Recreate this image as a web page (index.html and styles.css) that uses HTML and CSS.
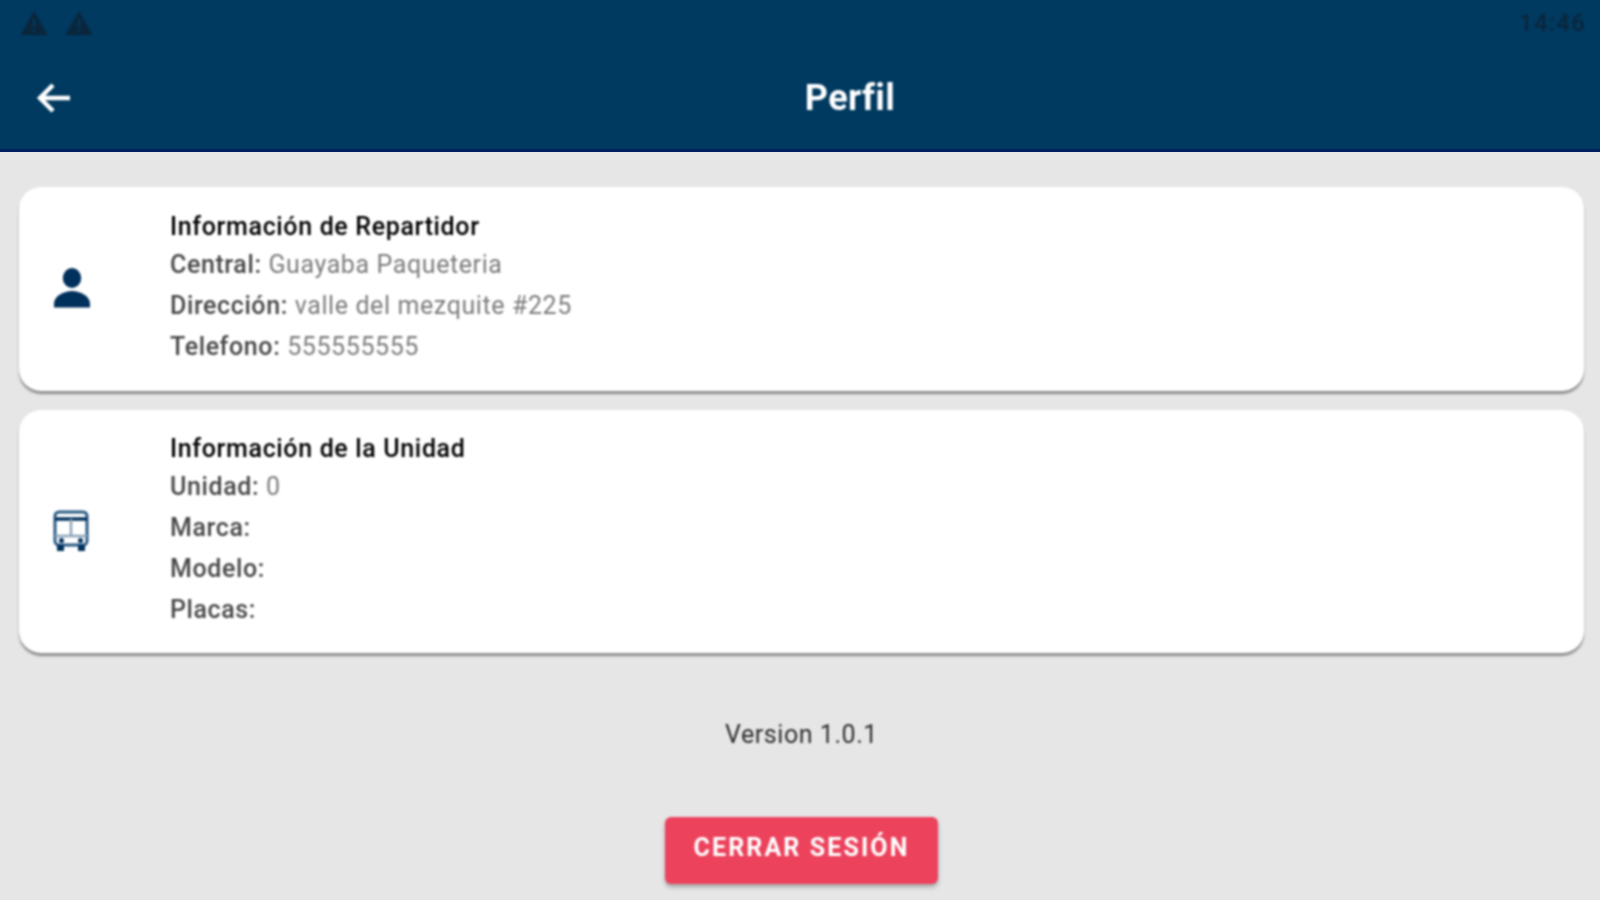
FILE: index.html
```html
<!DOCTYPE html>
<html lang="es">
<head>
<meta charset="utf-8">
<title>Perfil</title>
<link rel="stylesheet" href="styles.css">
</head>
<body>
<div class="screen">
  <header class="appbar">
    <div class="status">
      <div class="status-icons">
        <svg class="warn" viewBox="0 0 28 26"><path d="M14 1 L27.500 25 H.5 Z" fill="#0a263c"/><path d="M12.800 9h2.400v8h-2.400zM12.800 19h2.400v2.600h-2.400z" fill="#003a60"/></svg>
        <svg class="warn" viewBox="0 0 28 26"><path d="M14 1 L27.500 25 H.5 Z" fill="#0a263c"/><path d="M12.800 9h2.400v8h-2.400zM12.800 19h2.400v2.600h-2.400z" fill="#003a60"/></svg>
      </div>
      <span class="clock">14:46</span>
    </div>
    <div class="toolbar">
      <svg class="back" viewBox="0 0 36 32"><path d="M34 16H4M17 3 4 16l13 13" fill="none" stroke="#fff" stroke-width="4.400"/></svg>
      <h1 class="title">Perfil</h1>
    </div>
  </header>
  <main class="content">
    <section class="card card-driver">
      <div class="card-icon">
        <svg class="icon-person" viewBox="0 0 38 40"><ellipse cx="19" cy="10" rx="9.200" ry="10" fill="#00305c"/><path d="M1 39.500v-4C1 28 11 23 19 23s18 5 18 12.500v4Z" fill="#00305c"/></svg>
      </div>
      <div class="card-body">
        <h2 class="card-title">Información de Repartidor</h2>
        <p class="row"><b>Central:</b> Guayaba Paqueteria</p>
        <p class="row"><b>Dirección:</b> valle del mezquite #225</p>
        <p class="row"><b>Telefono:</b> 555555555</p>
      </div>
    </section>
    <section class="card card-unit">
      <div class="card-icon">
        <svg class="icon-bus" viewBox="0 0 36 42"><g fill="none" stroke="#2a5a85" stroke-width="3"><rect x="2" y="2" width="32" height="33" rx="4"/><path d="M2 9h32" stroke="#00305c" stroke-width="3.500"/><path d="M2 26h32M18 9v17" stroke="#8aa3b8" stroke-width="2.500"/></g><circle cx="8.500" cy="30.500" r="2.500" fill="#00305c"/><circle cx="27.500" cy="30.500" r="2.500" fill="#00305c"/><path d="M4 35h7v6H4zM25 35h7v6h-7z" fill="#00305c"/></svg>
      </div>
      <div class="card-body">
        <h2 class="card-title">Información de la Unidad</h2>
        <p class="row"><b>Unidad:</b> 0</p>
        <p class="row"><b>Marca:</b></p>
        <p class="row"><b>Modelo:</b></p>
        <p class="row"><b>Placas:</b></p>
      </div>
    </section>
    <p class="version">Version 1.0.1</p>
    <button class="logout" type="button">CERRAR SESIÓN</button>
  </main>
</div>
</body>
</html>
```
FILE: styles.css
```css
html, body {
  margin: 0;
  height: 100%;
  overflow: hidden;
  background: #e6e6e6;
}
.screen {
  width: 1600px;
  height: 900px;
  display: flex;
  flex-direction: column;
  font-family: Roboto, "Liberation Sans", sans-serif;
}
.appbar {
  height: 149px;
  flex: none;
  background: #003a60;
  border-bottom: 3px solid #001f5c;
}
.status {
  height: 46px;
  display: flex;
  align-items: center;
  justify-content: space-between;
  padding: 0 14px 0 20px;
  filter: blur(0.8px);
}
.status-icons {
  display: flex;
  gap: 17px;
}
.warn {
  width: 28px;
  height: 26px;
  display: block;
}
.clock {
  font-size: 24px;
  font-weight: 500;
  letter-spacing: 1.2px;
  color: #0a263c;
}
.toolbar {
  position: relative;
  height: 103px;
  display: flex;
  align-items: center;
  justify-content: center;
  box-sizing: border-box;
  filter: blur(0.8px);
}
.back {
  position: absolute;
  left: 36px;
  top: 36px;
  width: 36px;
  height: 32px;
}
.title {
  margin: 0 0 0 100px;
  font-size: 36px;
  font-weight: 700;
  letter-spacing: 0.4px;
  color: #fff;
}
.content {
  flex: 1;
  display: flex;
  flex-direction: column;
  align-items: center;
  padding: 35px 16px 0 19px;
  filter: blur(0.8px);
}
.card {
  align-self: stretch;
  display: flex;
  align-items: center;
  background: #fff;
  border-radius: 22px;
  box-shadow: 0 3px 2px #8f8f8f;
}
.card-driver {
  height: 204px;
  margin-bottom: 19px;
}
.card-unit {
  height: 243px;
}
.card-icon {
  width: 151px;
  padding-left: 34px;
  box-sizing: border-box;
  flex: none;
  display: flex;
}
.icon-person {
  width: 38px;
  height: 40px;
  margin-top: -2px;
}
.icon-bus {
  width: 36px;
  height: 42px;
  margin-top: -2px;
}
.card-body {
  flex: 1;
  padding-bottom: 1px;
}
.card-title {
  margin: 0;
  font-size: 25px;
  line-height: 34px;
  font-weight: 500;
  letter-spacing: 0.65px;
  color: #000;
}
.row {
  margin: 0;
  font-size: 25px;
  line-height: 41px;
  letter-spacing: 0.6px;
  color: #7c7c7c;
}
.row b {
  font-weight: 500;
  color: #484848;
}
.version {
  margin: 65px 0 0;
  font-size: 25px;
  line-height: 34px;
  letter-spacing: 0.55px;
  color: #2e2e2e;
}
.logout {
  margin-top: 65px;
  width: 273px;
  height: 67px;
  border: 0;
  border-radius: 6px;
  background: #ec425c;
  color: #fff;
  font-family: inherit;
  font-size: 25px;
  font-weight: 700;
  letter-spacing: 2.1px;
  padding: 0 0 6px;
  box-shadow: 0 3px 4px #a5a5a5;
}
```
